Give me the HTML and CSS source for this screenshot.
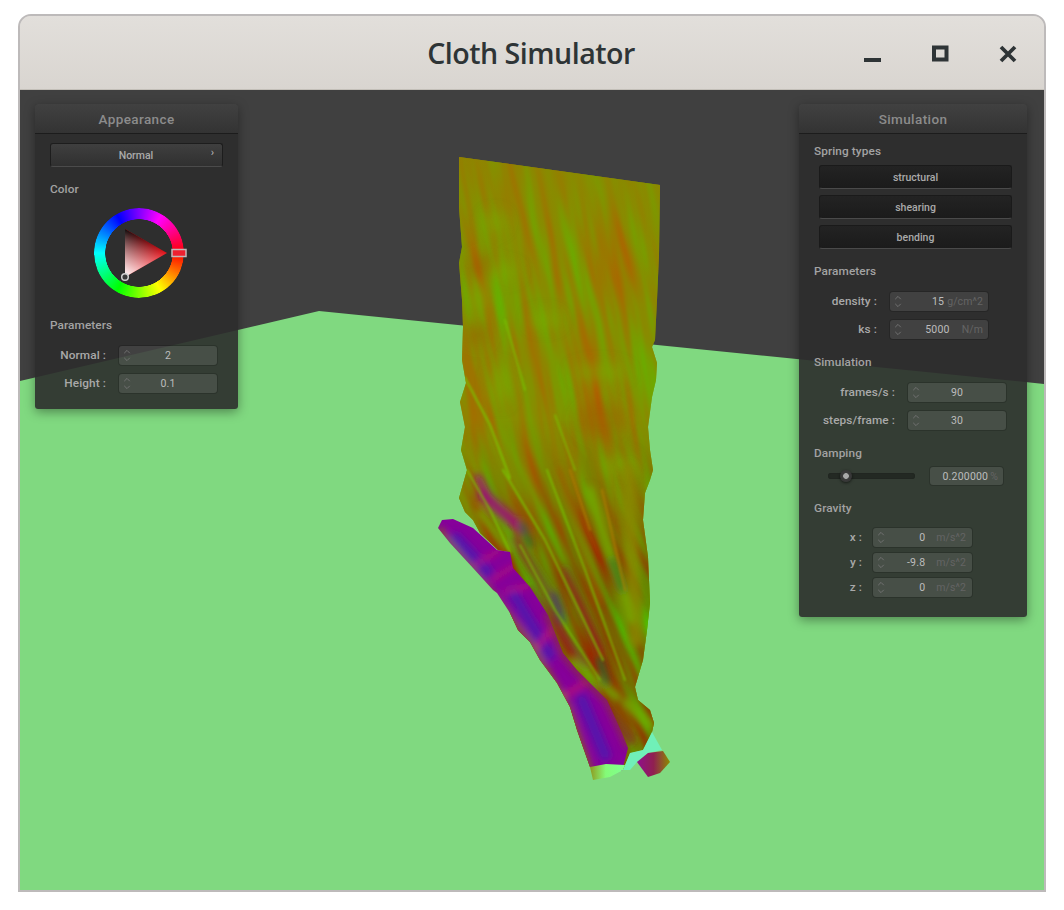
FILE: index.html
```html
<!DOCTYPE html>
<html lang="en">
<head>
<meta charset="utf-8">
<title>Cloth Simulator</title>
<link rel="stylesheet" href="styles.css">
</head>
<body>
<svg class="defs" width="0" height="0" aria-hidden="true">
  <symbol id="spin" viewBox="0 0 8 14">
    <polyline points="1,4.5 4,1.5 7,4.5"/>
    <polyline points="1,9.5 4,12.5 7,9.5"/>
  </symbol>
</svg>
<div class="window">
  <header class="titlebar">
    <h1 class="title">Cloth Simulator</h1>
    <div class="controls">
      <svg class="ctl" width="20" height="20" viewBox="0 0 20 20"><rect x="2" y="14" width="17" height="4"/></svg>
      <svg class="ctl" width="20" height="20" viewBox="0 0 20 20"><rect class="box" x="4" y="3.5" width="12.500" height="12"/></svg>
      <svg class="ctl" width="20" height="20" viewBox="0 0 20 20"><path class="cross" d="M3 3 L17 17 M17 3 L3 17"/></svg>
    </div>
  </header>
  <main class="scene">
    <svg class="world" viewBox="20 90 1025 800" width="1025" height="800" aria-hidden="true">
      <defs>
        <filter id="cloth-noise" x="0" y="0" width="100%" height="100%" color-interpolation-filters="sRGB">
          <feTurbulence type="fractalNoise" baseFrequency="0.075 0.009" numOctaves="2" seed="11"/>
          <feColorMatrix type="matrix" values="0.5 0 0 0 0.29  -0.55 0 0 0 0.82  0 0 0 0 0  0 0 0 0 1"/>
        </filter>
        <filter id="cloth-noise-low" x="0" y="0" width="100%" height="100%" color-interpolation-filters="sRGB">
          <feTurbulence type="fractalNoise" baseFrequency="0.06 0.008" numOctaves="2" seed="4"/>
          <feColorMatrix type="matrix" values="0.7 0 0 0 0.1  -1.4 0 0 0 1.05  0 0 0 0 0  0 0 0 0 1"/>
        </filter>
        <filter id="b1" x="-30%" y="-30%" width="160%" height="160%"><feGaussianBlur stdDeviation="1.2"/></filter>
        <filter id="b3" x="-50%" y="-50%" width="200%" height="200%"><feGaussianBlur stdDeviation="3.5"/></filter>
        <filter id="b7" x="-60%" y="-60%" width="220%" height="220%"><feGaussianBlur stdDeviation="7"/></filter>
        <clipPath id="cloth-clip">
          <polygon points="459,157 660,185 659,255 657,300 655,340 652,347 657,363 656,380 652,397 648,427 650,450 653,470 650,480 645,493 643,520 648,557 650,603 647,630 643,660 635,687 638,700 650,710 654,723 652,732 643,750 630,753 623,770 590,767 577,730 570,707 557,683 540,660 530,642 518,630 510,613 505,590 510,552 498,550 480,533 473,520 465,512 459,498 467,470 461,450 465,427 460,402 466,383 462,360 463,327 462,300 459,263 462,247 459,207"/>
        </clipPath>
        <clipPath id="strip-clip">
          <polygon points="442,520 453,519 473,528 497,550 510,552 513,568 530,587 548,615 563,653 577,670 607,700 622,733 628,748 622,771 590,767 577,730 570,707 557,683 540,660 530,642 518,630 510,613 497,593 493,590 473,568 450,543 438,528"/>
        </clipPath>
        <linearGradient id="fade" x1="0" y1="0" x2="0" y2="1">
          <stop offset="0" stop-color="#8a8a00" stop-opacity=".6"/><stop offset="1" stop-color="#8a8a00" stop-opacity="0"/>
        </linearGradient>
        <linearGradient id="low-fade" gradientUnits="userSpaceOnUse" x1="0" y1="420" x2="0" y2="580">
          <stop offset="0" stop-color="#000"/><stop offset="1" stop-color="#bbb"/>
        </linearGradient>
        <mask id="low-mask" maskUnits="userSpaceOnUse" x="330" y="100" width="450" height="720">
          <rect fill="url(#low-fade)" x="330" y="100" width="450" height="720"/>
        </mask>
        <linearGradient id="foot" x1="0" y1="0" x2="1" y2="0">
          <stop offset="0" stop-color="#8f9a20"/><stop offset=".45" stop-color="#84fb78"/><stop offset="1" stop-color="#80ff90"/>
        </linearGradient>
        <linearGradient id="toe" x1="0" y1="0" x2="1" y2="0">
          <stop offset="0" stop-color="#90108c"/><stop offset=".5" stop-color="#902050"/><stop offset="1" stop-color="#8c8c00"/>
        </linearGradient>
      </defs>
      <rect class="wall" x="20" y="90" width="1025" height="800"/>
      <polygon class="floor" points="20,381 319,311 1045,384 1045,890 20,890"/>

      <g clip-path="url(#cloth-clip)">
        <rect class="cloth-base" x="440" y="150" width="240" height="640"/>
        <g class="noise-up" transform="rotate(-11 550 450)">
          <rect filter="url(#cloth-noise)" x="340" y="110" width="430" height="700"/>
        </g>
        <g mask="url(#low-mask)">
          <g transform="rotate(-24 550 600)">
            <rect filter="url(#cloth-noise-low)" x="300" y="280" width="500" height="620"/>
          </g>
        </g>
        <rect fill="url(#fade)" x="440" y="150" width="240" height="130"/>
        <g filter="url(#b7)">
          <ellipse class="f-green" cx="495" cy="222" rx="11" ry="10"/>
          <ellipse class="f-brown" cx="482" cy="266" rx="14" ry="12"/>
          <ellipse class="f-green" cx="505" cy="272" rx="14" ry="8"/>
          <ellipse class="f-green" cx="478" cy="298" rx="12" ry="14"/>
          <ellipse class="f-brown" cx="478" cy="335" rx="12" ry="12"/>
          <ellipse class="f-green" cx="545" cy="320" rx="16" ry="8"/>
          <ellipse class="f-green" cx="600" cy="372" rx="28" ry="8"/>
          <ellipse class="f-green" cx="500" cy="385" rx="11" ry="20"/>
          <ellipse class="f-brown" cx="600" cy="420" rx="24" ry="18"/>
          <ellipse class="f-green" cx="620" cy="465" rx="20" ry="10"/>
        </g>
        <g filter="url(#b3)">
          <path class="s-mag" stroke-width="11" d="M483 495 L523 530"/>
          <path class="s-mag" stroke-width="7" d="M478 478 L490 500"/>
          <path class="s-red" stroke-width="8" d="M515 540 L560 610"/>
          <path class="s-red" stroke-width="8" d="M530 590 L585 665"/>
          <path class="s-red" stroke-width="6" d="M565 570 L600 650"/>
          <path class="s-red" stroke-width="9" d="M590 690 L630 740"/>
          <path class="s-olive" stroke-width="14" d="M628 470 L636 640"/>
          <path class="s-brown" stroke-width="6" d="M560 470 L600 600"/>
          <path class="s-green" stroke-width="8" d="M480 513 L508 548"/>
          <path class="s-green" stroke-width="8" d="M590 490 L630 620"/>
          <path class="s-green" stroke-width="9" d="M573 663 L617 697"/>
          <path class="s-green" stroke-width="11" d="M627 703 L650 725"/>
          <path class="s-dark" stroke-width="6" d="M522 525 L530 545"/>
          <path class="s-dark" stroke-width="7" d="M600 660 L606 682"/>
          <path class="s-blue" stroke-width="7" d="M554 595 L562 620"/>
          <path class="s-dark" stroke-width="5" d="M612 560 L622 590"/>
        </g>
        <g filter="url(#b1)">
          <path class="s-lime" stroke-width="2.200" d="M465 378 L490 425 L510 478"/>
          <path class="s-lime" stroke-width="2.200" d="M503 470 L545 540 L603 660"/>
          <path class="s-lime" stroke-width="2" d="M547 470 L585 570 L625 680"/>
          <path class="s-lime" stroke-width="2" d="M467 470 L490 510 L510 552"/>
          <path class="s-lime" stroke-width="1.800" d="M520 545 L555 610 L600 680"/>
          <path class="s-lime" stroke-width="1.600" d="M555 415 L575 470"/>
          <path class="s-ochre" stroke-width="2" d="M602 490 L625 590"/>
          <path class="s-ochre" stroke-width="2" d="M570 470 L590 530"/>
          <path class="s-lime" stroke-width="1.600" d="M505 320 L525 390"/>
        </g>
      </g>

      <g clip-path="url(#strip-clip)">
        <rect class="strip-base" x="430" y="510" width="210" height="270"/>
        <g filter="url(#b3)">
          <path class="blue" stroke-width="11" d="M456 538 L488 572"/>
          <path class="blue" stroke-width="11" d="M512 592 L550 655"/>
          <path class="blue" stroke-width="12" d="M582 700 L605 755"/>
          <path class="red" stroke-width="3" d="M475 565 L500 550"/>
          <path class="red" stroke-width="3" d="M492 580 L515 565"/>
          <path class="red" stroke-width="3" d="M505 592 L530 585"/>
          <path class="red" stroke-width="4" d="M565 695 L590 680"/>
          <path class="red" stroke-width="4" d="M555 625 L535 650"/>
          <path class="olive" stroke-width="4" d="M440 530 L490 592 L530 642 L568 707 L590 770"/>
          <path class="edge" stroke-width="7" d="M548 615 L563 653 L577 670 L607 700 L628 745"/>
        </g>
      </g>

      <polygon class="cyan" points="652,732 662,750 648,753 637,762 630,770 623,770 630,753 643,750"/>
      <polygon fill="url(#foot)" points="590,767 606,764 625,765 623,770 610,777 593,780"/>
      <polygon fill="url(#toe)" points="637,762 648,753 663,751 670,762 660,773 648,777"/>
    </svg>

    <section class="panel panel-left">
      <h2 class="panel-head">Appearance</h2>
      <div class="panel-body">
        <div class="combo"><span>Normal</span><i class="chev">›</i></div>
        <h3 class="group color-head">Color</h3>
        <div class="wheel-wrap">
          <div class="wheel">
            <div class="ring"></div>
            <svg class="wheel-over" width="110" height="110" viewBox="0 0 110 110" aria-hidden="true">
              <defs>
                <linearGradient id="tw" gradientUnits="userSpaceOnUse" x1="40" y1="78" x2="63" y2="42">
                  <stop offset="0" stop-color="#fff"/><stop offset="1" stop-color="#fff" stop-opacity="0"/>
                </linearGradient>
                <linearGradient id="tk" gradientUnits="userSpaceOnUse" x1="40" y1="30" x2="63" y2="66">
                  <stop offset="0" stop-color="#000"/><stop offset="1" stop-color="#000" stop-opacity="0"/>
                </linearGradient>
              </defs>
              <polygon class="tri-red" points="82,54 40,30 40,78"/>
              <polygon fill="url(#tk)" points="82,54 40,30 40,78"/>
              <polygon fill="url(#tw)" points="82,54 40,30 40,78"/>
              <circle class="tri-mark" cx="40" cy="78" r="3.300"/>
              <rect class="hue-mark" x="87" y="50.500" width="14" height="7"/>
            </svg>
          </div>
        </div>
        <h3 class="group params-head">Parameters</h3>
        <div class="rows">
          <div class="row lw-l"><label>Normal :</label><div class="num w98"><svg class="spin"><use href="#spin"/></svg><span class="val ctr">2</span></div></div>
          <div class="row lw-l"><label>Height :</label><div class="num w98"><svg class="spin"><use href="#spin"/></svg><span class="val ctr">0.1</span></div></div>
        </div>
      </div>
    </section>

    <section class="panel panel-right">
      <h2 class="panel-head">Simulation</h2>
      <div class="panel-body">
        <h3 class="group top">Spring types</h3>
        <div class="buttons">
          <button class="btn">structural</button>
          <button class="btn">shearing</button>
          <button class="btn">bending</button>
        </div>
        <h3 class="group sp15">Parameters</h3>
        <div class="rows">
          <div class="row lw-d"><label>density :</label><div class="num w98"><svg class="spin"><use href="#spin"/></svg><span class="val">15</span><span class="unit">g/cm^2</span></div></div>
          <div class="row lw-d"><label>ks :</label><div class="num w98"><svg class="spin"><use href="#spin"/></svg><span class="val">5000</span><span class="unit nm">N/m</span></div></div>
        </div>
        <h3 class="group">Simulation</h3>
        <div class="rows">
          <div class="row lw-f"><label>frames/s :</label><div class="num w98"><svg class="spin"><use href="#spin"/></svg><span class="val ctr">90</span></div></div>
          <div class="row lw-f"><label>steps/frame :</label><div class="num w98"><svg class="spin"><use href="#spin"/></svg><span class="val ctr">30</span></div></div>
        </div>
        <h3 class="group">Damping</h3>
        <div class="slider-row">
          <div class="track"><span class="knob"></span></div>
          <div class="num pct"><span class="val">0.200000</span><span class="unit">%</span></div>
        </div>
        <h3 class="group">Gravity</h3>
        <div class="rows tight">
          <div class="row lw-g"><label>x :</label><div class="num w99"><svg class="spin"><use href="#spin"/></svg><span class="val">0</span><span class="unit ms">m/s^2</span></div></div>
          <div class="row lw-g"><label>y :</label><div class="num w99"><svg class="spin"><use href="#spin"/></svg><span class="val">-9.8</span><span class="unit ms">m/s^2</span></div></div>
          <div class="row lw-g"><label>z :</label><div class="num w99"><svg class="spin"><use href="#spin"/></svg><span class="val">0</span><span class="unit ms">m/s^2</span></div></div>
        </div>
      </div>
    </section>
  </main>
</div>
</body>
</html>
```
FILE: styles.css
```css
* { box-sizing: border-box; }
html, body { margin: 0; height: 100%; background: #fff; }
body { padding: 14px 18px 0; font-family: Roboto, "Liberation Sans", sans-serif; overflow: hidden; }
.defs { position: absolute; }

.window {
  width: 1028px; height: 878px;
  display: flex; flex-direction: column;
  border: 2px solid #bdbaba;
  border-radius: 13px 13px 0 0;
  overflow: hidden;
  background: #dedbd7;
}
.titlebar {
  height: 74px; flex: none;
  position: relative;
  display: flex; align-items: center; justify-content: center;
  background: linear-gradient(#e2dfdb, #d9d5d0);
  border-bottom: 1px solid #c3bfb8;
}
.title {
  margin: 2px 0 0 -2px;
  font: 600 28.600px/1 "Open Sans", sans-serif;
  letter-spacing: -0.5px;
  color: #2e3436;
}
.controls { position: absolute; right: 26px; top: 28px; display: flex; gap: 48px; }
.ctl { display: block; fill: #2e3436; }
.ctl .box { fill: none; stroke: #2e3436; stroke-width: 4; }
.ctl .cross { fill: none; stroke: #2e3436; stroke-width: 3.800; }

.scene {
  flex: 1; position: relative;
  display: flex; justify-content: space-between; align-items: flex-start;
  padding: 14px 17px 0 15px;
  overflow: hidden;
}
.world { position: absolute; left: 0; top: 0; display: block; }
.wall { fill: #404040; }
.floor { fill: #80d980; }

.strip-base { fill: #86009a; }
.cloth-base { fill: #8a8a00; }
.noise-up { opacity: .72; }
.world path { fill: none; stroke-linecap: round; stroke-linejoin: round; }
.blue { stroke: #4a18b0; opacity: .8; }
.red { stroke: #c01870; }
.olive { stroke: #8c7a00; }
.edge { stroke: #8a3040; opacity: .85; }
.f-green { fill: #78b000; opacity: .5; }
.f-brown { fill: #a05a00; opacity: .5; }
.s-green { stroke: #70b000; opacity: .8; }
.s-brown { stroke: #a05a00; opacity: .6; }
.s-olive { stroke: #8a8a00; opacity: .8; }
.s-dark { stroke: #1f6a30; opacity: .8; }
.s-mag { stroke: #9c0a78; opacity: .9; }
.s-red { stroke: #842830; opacity: .7; }
.s-blue { stroke: #3c2a80; opacity: .7; }
.s-lime { stroke: #78c800; opacity: .75; }
.s-ochre { stroke: #b08000; opacity: .7; }
.cyan { fill: #70f0b8; }

.panel {
  position: relative; flex: none;
  background: rgba(44, 44, 44, .906);
  border-radius: 3px;
  box-shadow: 0 3px 11px rgba(0, 0, 0, .38);
  color: #aaa;
}
.panel-left { width: 203px; height: 305px; }
.panel-right { width: 228px; height: 513px; }
.panel-head {
  margin: 0; height: 30px;
  display: flex; align-items: center; justify-content: center;
  padding-top: 2px;
  font: 500 13.500px/1 Roboto, sans-serif;
  letter-spacing: .4px;
  color: #8c8c8c;
  background: linear-gradient(#414141, #333);
  border-bottom: 1px solid #1c1c1c;
  border-radius: 3px 3px 0 0;
}
.panel-body { display: flex; flex-direction: column; }
.panel-left .panel-body { padding: 9px 15px 0; }
.panel-right .panel-body { padding: 0 15px 0; }

.group {
  margin: 0; height: 14px;
  font: 500 11.800px/14px Roboto, sans-serif;
  letter-spacing: .1px;
  color: #a3a3a3;
}
.combo {
  position: relative; height: 24px; width: 173px;
  display: flex; align-items: center; justify-content: center;
  padding-top: 2px; padding-right: 1px;
  font: 500 10.500px/1 Roboto, sans-serif;
  color: #aaa;
  background: linear-gradient(#3f3f3f, #303030);
  border: 1px solid #1d1d1d;
  border-bottom-color: #4b4b4b;
  border-radius: 3px;
}
.chev { position: absolute; right: 8px; top: 3px; font: normal 11px/1 Roboto, sans-serif; color: #bbb; }
.color-head { margin-top: 15px; }
.wheel-wrap { display: flex; margin: 12px 0 0 -1px; }
.wheel { position: relative; width: 90px; height: 90px; margin-left: 45px; }
.ring {
  width: 90px; height: 90px; border-radius: 50%;
  background: conic-gradient(from 90deg, #f00, #ff0, #0f0, #0ff, #00f, #f0f, #f00);
  -webkit-mask: radial-gradient(circle closest-side, transparent 33.500px, #000 34px);
  mask: radial-gradient(circle closest-side, transparent 33.500px, #000 34px);
}
.wheel-over { position: absolute; left: -9px; top: -9px; overflow: visible; }
.tri-red { fill: #e8141c; }
.tri-mark { fill: #3a3a3a; stroke: #d0d0d0; stroke-width: 1.500; }
.hue-mark { fill: #ee2030; stroke: #c4b8b8; stroke-width: 1.500; }
.params-head { margin-top: 20px; }

.rows { display: flex; flex-direction: column; gap: 9px; margin-top: 14px; }
.rows.tight { gap: 6px; margin-top: 13px; }
.row { display: flex; align-items: center; height: 19px; }
.row label {
  flex: none; text-align: right;
  font: 500 11.800px/1 Roboto, sans-serif;
  letter-spacing: .1px;
  color: #a9a9a9;
}
.lw-l label { width: 56px; margin-right: 13px; }
.lw-d label { width: 63px; margin-right: 13px; }
.lw-f label { width: 81px; margin-right: 13px; }
.lw-g label { width: 48px; margin-right: 11px; }

.num {
  position: relative; height: 19px;
  display: flex; align-items: center; justify-content: flex-end;
  background: rgba(255, 255, 255, .095);
  border-radius: 3px;
  box-shadow: 0 0 0 1px rgba(0, 0, 0, .16);
  font: 400 10.500px/1 Roboto, sans-serif;
  color: #bdbdbd;
}
.w98 { width: 98px; }
.w99 { width: 99px; }
.spin {
  position: absolute; left: 4px; top: 3px; width: 8px; height: 13px;
  fill: none; stroke: #747474; stroke-width: 1;
}
.val { letter-spacing: .2px; padding-top: 2px; }
.val.ctr { flex: 1; text-align: center; }
.unit { color: #646464; margin: 2px 5px 0 3px; letter-spacing: .1px; }
.unit.nm { margin-left: 12px; }
.unit.ms { margin-left: 11px; margin-right: 6px; }

.buttons { display: flex; flex-direction: column; gap: 6px; margin: 7px 0 0 5px; }
.btn {
  width: 193px; height: 24px; padding: 2px 0 0;
  font: 500 10.500px/1 Roboto, sans-serif;
  color: #aaa;
  background: linear-gradient(#232323, #1b1b1b);
  border: 1px solid #1a1a1a;
  border-bottom-color: #4a4a4a;
  border-radius: 3px;
}
.panel-right .group { margin-top: 16px; }
.panel-right .group.sp15 { margin-top: 15px; }
.panel-right .group.top { margin-top: 10px; }

.slider-row { display: flex; align-items: center; margin-top: 7px; padding-left: 14px; }
.track {
  position: relative; width: 87px; height: 6px;
  background: rgba(0, 0, 0, .32);
  border-radius: 3px;
  box-shadow: inset 0 0 1px rgba(0, 0, 0, .5);
}
.knob {
  position: absolute; left: 12px; top: -3px; width: 12px; height: 12px;
  border-radius: 50%;
  background: radial-gradient(circle, #a8a8a8 0 2.500px, #3c3c3c 3.200px, #2e2e2e 100%);
  box-shadow: 0 1px 3px rgba(0, 0, 0, .6);
}
.pct { width: 73px; height: 18px; margin-left: 15px; }
.pct .unit { margin: 2px 5px 0 2px; }
```
